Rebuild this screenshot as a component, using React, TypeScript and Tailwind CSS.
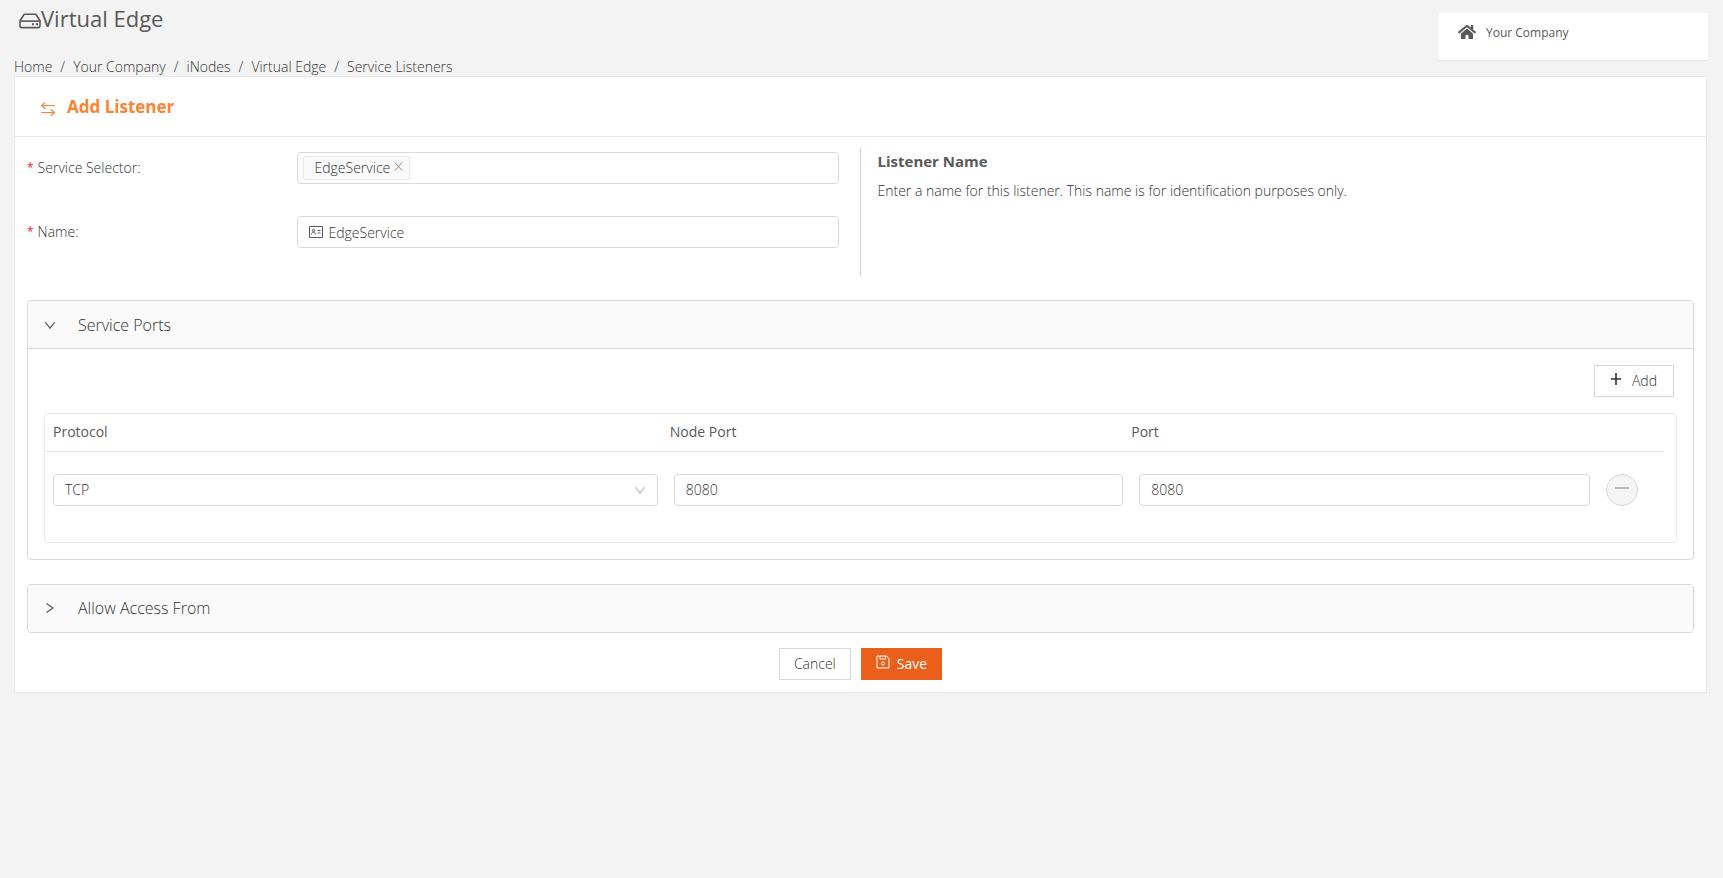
import { useState } from "react";
import type { ReactNode } from "react";

const breadcrumbs = ["Home", "Your Company", "iNodes", "Virtual Edge", "Service Listeners"];

const fieldClass =
  "h-8 w-full rounded border border-[#d9d9d9] bg-white text-sm font-light text-[#333] outline-none focus:border-[#ea601a]";

function DriveIcon() {
  return (
    <svg width="22" height="16" viewBox="0 0 22 16" fill="none" stroke="#595959" strokeWidth="1.6" className="mt-1.5" aria-hidden="true">
      <path d="M5.2 1.2h11.6l4.2 6.6v5a1.800 1.800 0 0 1-1.800 1.800H2.800A1.800 1.800 0 0 1 1 12.800v-5z" strokeLinejoin="round" />
      <path d="M1.2 8.100h19.6" />
      <path d="M13 11.300h2M17 11.300h2" strokeWidth="2" />
    </svg>
  );
}

function SwapArrowsIcon() {
  return (
    <svg width="14" height="14" viewBox="0 0 14 14" fill="none" stroke="currentColor" strokeWidth="1.100" strokeLinecap="round" strokeLinejoin="round" className="mt-1" aria-hidden="true">
      <path d="M4 .6.6 3.500 4 6.500M.6 3.500h12.800" />
      <path d="m10 7.500 3.400 3-3.400 3M13.400 10.500H.6" />
    </svg>
  );
}

function HomeIcon() {
  return (
    <svg width="18" height="14" viewBox="0 0 576 448" fill="#595959" aria-hidden="true">
      <path d="M280.400 116.300 96 268.100V432a16 16 0 0 0 16 16l112.100-.3a16 16 0 0 0 15.900-16V336a16 16 0 0 1 16-16h64a16 16 0 0 1 16 16v95.600a16 16 0 0 0 16 16.100L464 448a16 16 0 0 0 16-16V268L295.700 116.300a12.200 12.200 0 0 0-15.300 0zM571.600 219.500 488 150.600V12a12 12 0 0 0-12-12h-56a12 12 0 0 0-12 12v72.600L318.500 11a48 48 0 0 0-61 0L4.300 219.500a12 12 0 0 0-1.600 16.900l25.500 31a12 12 0 0 0 16.900 1.600L280.400 75.200a12.200 12.200 0 0 1 15.300 0L531 269a12 12 0 0 0 16.900-1.600l25.500-31a12 12 0 0 0-1.800-16.900z" />
    </svg>
  );
}

function IdCardIcon() {
  return (
    <svg width="14" height="12" viewBox="0 0 14 12" fill="none" stroke="#595959" aria-hidden="true">
      <path d="M.5.500h13v11H.5z" />
      <path d="M2.500 8.500c.3-3 3.600-3 4 0" />
      <circle cx="4.500" cy="4.500" r="1.200" />
      <path d="M8.500 4.500h3M8.500 7h3" />
    </svg>
  );
}

function SaveIcon() {
  return (
    <svg width="14" height="14" viewBox="0 0 14 14" fill="none" stroke="currentColor" className="mb-1" aria-hidden="true">
      <path d="M1 1h9.500L13 3.500V13H1z" strokeLinejoin="round" />
      <path d="M4 1v3h5.500V1" />
      <circle cx="7" cy="8.500" r="1.600" />
    </svg>
  );
}

function Chevron({ open, color = "#595959" }: { open?: boolean; color?: string }) {
  return (
    <svg width="12" height="12" viewBox="0 0 12 12" fill="none" stroke={color} strokeWidth="1.2" aria-hidden="true">
      {open ? <path d="m1.200 3 4.800 6.200L10.800 3" /> : <path d="M2.500 1.500 9 6l-6.500 4.500" />}
    </svg>
  );
}

function Panel({
  title,
  defaultOpen = false,
  children,
}: {
  title: string;
  defaultOpen?: boolean;
  children?: ReactNode;
}) {
  const [open, setOpen] = useState(defaultOpen);

  return (
    <section className="overflow-hidden rounded border border-[#d9d9d9]">
      <h2>
        <button
          type="button"
          aria-expanded={open}
          onClick={() => setOpen(!open)}
          className="flex h-[47px] w-full items-center gap-[22px] bg-[#fafafa] pl-4 text-left text-base font-light">
          <Chevron open={open} />
          {title}
        </button>
      </h2>
      {open && <div className="border-t border-[#d9d9d9] p-4">{children}</div>}
    </section>
  );
}

function FieldLabel({ htmlFor, children }: { htmlFor: string; children: ReactNode }) {
  return (
    <label htmlFor={htmlFor} className="flex w-1/3 shrink-0 items-center gap-1 text-sm font-light">
      <span className="text-xs font-normal text-[#f5222d]">*</span>
      <span>{children}:</span>
    </label>
  );
}

function PortsTable() {
  const [protocol, setProtocol] = useState("TCP");
  const [nodePort, setNodePort] = useState("8080");
  const [port, setPort] = useState("8080");

  return (
    <div className="rounded border border-[#e8e8e8] pr-3 pb-9">
      <table className="w-full table-fixed text-left text-sm">
        <thead>
          <tr className="h-[37px] border-b border-[#e8e8e8] text-[#595959]">
            <th className="w-[38.1%] px-2 font-medium">Protocol</th>
            <th className="w-[28.5%] px-2 font-medium">Node Port</th>
            <th className="w-[28.8%] px-2 font-medium">Port</th>
            <th aria-label="Actions" />
          </tr>
        </thead>
        <tbody>
          <tr>
            <td className="pt-[22px] pr-1 pl-2">
              <div className="relative">
                <select
                  aria-label="Protocol"
                  value={protocol}
                  onChange={(e) => setProtocol(e.target.value)}
                  className={`${fieldClass} appearance-none px-[11px]`}>
                  <option>TCP</option>
                  <option>UDP</option>
                </select>
                <span className="pointer-events-none absolute top-2.5 right-3">
                  <Chevron open color="#bfbfbf" />
                </span>
              </div>
            </td>
            <td className="pt-[22px] pl-3">
              <input
                aria-label="Node Port"
                value={nodePort}
                onChange={(e) => setNodePort(e.target.value)}
                className={`${fieldClass} px-[11px]`}
              />
            </td>
            <td className="pt-[22px] pl-4">
              <input
                aria-label="Port"
                value={port}
                onChange={(e) => setPort(e.target.value)}
                className={`${fieldClass} px-[11px]`}
              />
            </td>
            <td className="pt-[22px] pl-4">
              <button
                type="button"
                aria-label="Remove port"
                className="flex size-8 items-center justify-center rounded-full border border-[#d9d9d9] bg-[#f5f5f5] pb-1">
                <span className="h-0.5 w-3.5 bg-[#b8b8b8]" />
              </button>
            </td>
          </tr>
        </tbody>
      </table>
    </div>
  );
}

export default function App() {
  const [name, setName] = useState("EdgeService");
  const [services, setServices] = useState(["EdgeService"]);

  return (
    <div className="min-h-screen bg-[#f3f3f3] pr-4 pl-3.5 font-['Open_Sans','Noto_Sans',sans-serif] text-[#333]">
      <header className="flex h-[76px] justify-between">
        <div className="flex flex-col justify-between">
          <h1 className="flex items-center pt-1 pl-[5px] text-[22px] leading-7 text-[#595959]">
            <DriveIcon />
            Virtual Edge
          </h1>
          <nav aria-label="Breadcrumb">
            <ol className="flex text-sm leading-[18px] font-light">
              {breadcrumbs.map((crumb, i) => (
                <li key={crumb}>
                  {i > 0 && <span className="px-2">/</span>}
                  <a href="#">{crumb}</a>
                </li>
              ))}
            </ol>
          </nav>
        </div>
        <a
          href="#"
          className="-mr-px mt-[13px] flex h-12 w-[270px] gap-2.5 border-b border-[#e8e8e8] bg-white px-5 pt-3 text-xs leading-4 text-[#595959]">
          <HomeIcon />
          Your Company
        </a>
      </header>

      <main className="border border-[#e8e8e8] bg-white">
        <div className="flex h-[60px] items-center gap-3 border-b border-[#e8e8e8] px-[26px] text-[#fa8334]">
          <SwapArrowsIcon />
          <h2 className="text-[17px] leading-6 font-bold">Add Listener</h2>
        </div>

        <form className="px-3 pb-3" onSubmit={(e) => e.preventDefault()}>
          <div className="grid grid-cols-2 pt-[11px]">
            <div className="flex flex-col gap-8 pt-1 pr-[22px]">
              <div className="flex">
                <FieldLabel htmlFor="service-selector">Service Selector</FieldLabel>
                <div className="flex h-8 flex-1 items-center rounded border border-[#d9d9d9] px-[5px]">
                  {services.map((service) => (
                    <span
                      key={service}
                      className="flex h-6 items-center gap-1 rounded-xs border border-[#e8e8e8] bg-[#fafafa] pr-1.5 pl-2.5 text-sm font-light">
                      {service}
                      <button
                        type="button"
                        aria-label={`Remove ${service}`}
                        className="pb-1"
                        onClick={() => setServices(services.filter((s) => s !== service))}>
                        <svg width="9" height="9" viewBox="0 0 9 9" stroke="#8c8c8c" className="block" aria-hidden="true">
                          <path d="m1 .500 7 8M8 .500l-7 8" />
                        </svg>
                      </button>
                    </span>
                  ))}
                  <input id="service-selector" className="min-w-0 flex-1 bg-transparent text-sm outline-none" />
                </div>
              </div>
              <div className="flex">
                <FieldLabel htmlFor="listener-name">Name</FieldLabel>
                <div className="relative flex-1">
                  <span className="pointer-events-none absolute top-2.5 left-3">
                    <IdCardIcon />
                  </span>
                  <input
                    id="listener-name"
                    value={name}
                    onChange={(e) => setName(e.target.value)}
                    className={`${fieldClass} pr-3 pl-[30px]`}
                  />
                </div>
              </div>
            </div>
            <aside className="-ml-px h-32 border-l border-[#ccc] pt-px pl-[17px]">
              <h3 className="text-[15px] leading-6 font-bold text-[#595959]">Listener Name</h3>
              <p className="pt-2 text-sm font-light">
                Enter a name for this listener. This name is for identification purposes only.
              </p>
            </aside>
          </div>

          <div className="flex flex-col gap-6 pt-6">
            <Panel title="Service Ports" defaultOpen>
              <div className="flex justify-end pr-[3px] pb-4">
                <button
                  type="button"
                  className="flex h-8 items-center gap-[11px] border border-[#d9d9d9] bg-white px-4 text-sm font-light shadow-xs">
                  <svg width="10" height="12" viewBox="0 0 10 12" stroke="#333" strokeWidth="1.6" className="mb-1" aria-hidden="true">
                    <path d="M5 0v12M0 6h10" />
                  </svg>
                  Add
                </button>
              </div>
              <PortsTable />
            </Panel>
            <Panel title="Allow Access From" />
          </div>

          <div className="flex justify-center gap-2.5 pt-[15px]">
            <button type="button" className="h-8 border border-[#d9d9d9] bg-white px-3.5 text-sm font-light">
              Cancel
            </button>
            <button type="submit" className="flex h-8 items-center gap-[7px] bg-[#ea601a] px-[15px] text-sm text-white">
              <SaveIcon />
              Save
            </button>
          </div>
        </form>
      </main>
    </div>
  );
}
